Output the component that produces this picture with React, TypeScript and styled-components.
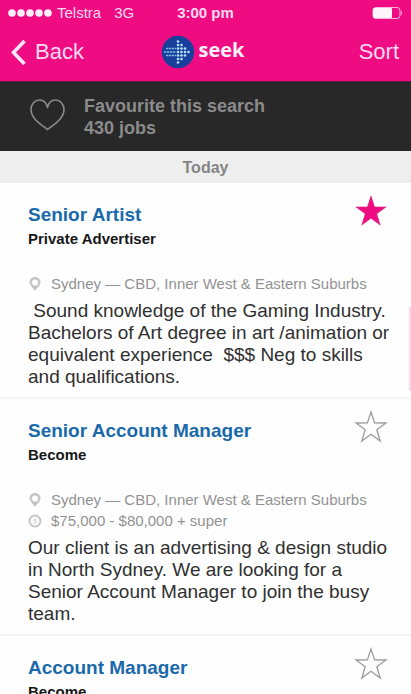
import React, { useState } from "react";
import styled, { createGlobalStyle } from "styled-components";

const GlobalStyle = createGlobalStyle`
  * { box-sizing: border-box; }
  html, body, #root { height: 100%; }
  body {
    margin: 0;
    background: #fefefe;
    font-family: "Liberation Sans", Arial, Helvetica, sans-serif;
    color: #303030;
  }
  h1, h2, p, ul { margin: 0; padding: 0; }
  button { font: inherit; border: 0; padding: 0; background: none; cursor: pointer; }
`;

const Screen = styled.div`
  height: 100vh;
  display: flex;
  flex-direction: column;
  overflow: hidden;
`;

const Header = styled.header`
  background: #ef0c82;
  color: #ffd9f0;
`;

const StatusBar = styled.div`
  display: grid;
  grid-template-columns: 1fr auto 1fr;
  align-items: center;
  height: 25px;
  padding: 0 8px;
  font-size: 15px;
`;

const Carrier = styled.div`
  display: flex;
  align-items: center;
  gap: 5px;
`;

const Network = styled.span`
  margin-left: 8px;
`;

const Clock = styled.span`
  font-weight: bold;
`;

const BatteryIcon = styled.svg`
  justify-self: end;
`;

const NavBar = styled.nav`
  display: grid;
  grid-template-columns: 1fr auto 1fr;
  align-items: center;
  height: 56px;
  padding: 0 12px 2px 10px;
`;

const NavButton = styled.button<{ $end?: boolean }>`
  display: flex;
  align-items: center;
  gap: 9px;
  justify-self: ${(p) => (p.$end ? "end" : "start")};
  color: #ffd9f0;
  font-size: 22px;
  line-height: 26px;
`;

const Brand = styled.h1`
  display: flex;
  align-items: center;
  gap: 4px;
  padding-right: 4px;
  color: #fff0f8;
  font: bold 20px/32px "Open Sans", "Noto Sans", sans-serif;
`;

const BrandName = styled.span`
  padding-bottom: 5px;
`;

const Favourite = styled.button`
  display: flex;
  flex-shrink: 0;
  align-items: center;
  gap: 18px;
  width: 100%;
  height: 70px;
  padding: 0 30px 0 29px;
  border-top: 1px solid #5d1740;
  background: #282828;
  color: #8b8b8b;
  text-align: left;
`;

const FavouriteText = styled.span`
  display: flex;
  flex-direction: column;
  font-weight: bold;
  font-size: 18px;
  line-height: 22px;
`;

const DayHeading = styled.h2`
  flex-shrink: 0;
  background: #eeeeee;
  color: #858585;
  font-size: 16px;
  line-height: 32px;
  padding-top: 1px;
  height: 32px;
  text-align: center;
`;

const ListArea = styled.main`
  position: relative;
  flex: 1;
  min-height: 0;
  overflow: hidden;
`;

const JobList = styled.ul`
  list-style: none;
`;

const ScrollMark = styled.span`
  position: absolute;
  top: 124px;
  right: 0;
  width: 2px;
  height: 84px;
  background: #fcd5e8;
`;

const JobItem = styled.li`
  padding: 20px 20px 9px 28px;
  border-bottom: 2px solid #f4f4f4;
`;

const JobTop = styled.div`
  display: flex;
  justify-content: space-between;
  align-items: flex-start;
`;

const JobHeading = styled.div`
  display: flex;
  flex-direction: column;
  height: 70px;
`;

const JobTitle = styled.a`
  color: #1a69aa;
  font-weight: bold;
  font-size: 19px;
  line-height: 24px;
  text-decoration: none;
`;

const Company = styled.p`
  color: #181818;
  font-weight: bold;
  font-size: 15px;
  line-height: 23px;
`;

const StarButton = styled.button`
  display: flex;
  margin: -9px 3px 0 0;
`;

const MetaList = styled.div`
  padding-bottom: 6px;
`;

const Meta = styled.p`
  display: flex;
  align-items: center;
  gap: 8px;
  color: #929292;
  font-size: 15px;
  line-height: 21px;
`;

const Summary = styled.p`
  font-size: 19px;
  line-height: 22px;
  white-space: pre-wrap;
`;

const SignalDots = () => (
  <svg width="44" height="10" viewBox="0 0 44 10" fill="#fff0f8" aria-hidden="true">
    {[4, 13, 22, 31, 40].map((x) => (
      <circle key={x} cx={x} cy="5" r="3.8" />
    ))}
  </svg>
);

const Battery = () => (
  <BatteryIcon width="32" height="14" viewBox="0 0 32 14" aria-hidden="true">
    <rect x="2" y="1.5" width="27" height="11" rx="3" fill="none" stroke="#ffb5dd" />
    <rect x="2" y="2" width="19" height="10" rx="1" fill="#fff4fa" />
    <path d="M30 4.500Q32 7 30 9.500Z" fill="#ffb5dd" />
  </BatteryIcon>
);

const BackChevron = () => (
  <svg width="16" height="26" viewBox="0 0 16 26" fill="none" aria-hidden="true">
    <path d="M14.500 2 3.500 13.500l11 11.500" stroke="#ffe6f5" strokeWidth="3.600" />
  </svg>
);

const logoColumns = [
  { x: 17, ys: [6.5, 10, 13.5, 17, 20.5, 24, 27.5] },
  { x: 20.5, ys: [10, 13.5, 17, 20.5, 24] },
  { x: 24, ys: [13.5, 17, 20.5] },
  { x: 27.5, ys: [17] },
];

const SeekLogo = () => (
  <svg width="34" height="34" viewBox="0 0 34 34" aria-hidden="true">
    <circle cx="17" cy="17" r="16.2" fill="#173f9b" />
    <g fill="#b4e2f5">
      {logoColumns.map((c) =>
        c.ys.map((y) => <circle key={`${c.x}-${y}`} cx={c.x} cy={y} r="1.35" />)
      )}
    </g>
    <path
      d="M5 13.500h10M3 17h12M5 20.500h10"
      stroke="#7eb8e3"
      strokeWidth="1.500"
      strokeDasharray="2.400 .6"
    />
  </svg>
);

const Heart = () => (
  <svg width="37" height="36" viewBox="0 1 37 36" fill="none" aria-hidden="true">
    <path
      d="M18.500 31.500C12 26.500 2 20.500 2 11.500 2 6 6 2 10.500 2c4 0 7 3 8 7.500C19.500 5 22.500 2 26.500 2 31 2 35 6 35 11.500c0 9-10 15-16.500 20Z"
      stroke="#8c8c8c"
      strokeWidth="1.600"
      strokeLinejoin="round"
    />
  </svg>
);

const Star = ({ filled }: { filled: boolean }) => (
  <svg width="34" height="34" viewBox="0 0 34 34" aria-hidden="true">
    <path
      d="m17 2 3.600 10.900 11.400.1-9.200 6.800 3.400 11.200L17 24.300 7.800 31l3.400-11.200L2 13l11.400-.1Z"
      fill={filled ? "#ef0c82" : "none"}
      stroke={filled ? "#cf2884" : "#9b9b9b"}
      strokeWidth={filled ? 0.6 : 1.3}
    />
  </svg>
);

const Pin = () => (
  <svg width="15" height="16" viewBox="0 0 15 16" aria-hidden="true">
    <path
      fillRule="evenodd"
      d="M7 1C3.700 1 1.500 3.300 1.500 6.300 1.500 9.500 5 12 7 15c2-3 5.500-5.500 5.500-8.700C12.500 3.300 10.300 1 7 1Zm0 2.500a3 3 0 1 1 0 6 3 3 0 0 1 0-6Z"
      fill="#c6c6c6"
    />
  </svg>
);

const Coin = () => (
  <svg width="15" height="16" viewBox="0 0 15 16" fill="none" aria-hidden="true">
    <circle cx="7" cy="8" r="5.500" stroke="#c6c6c6" strokeWidth="2" />
    <path d="M8.500 6H6.800a1 1 0 0 0 0 2h.6a1 1 0 0 1 0 2H5.500" stroke="#d0d0d0" />
  </svg>
);

interface Job {
  title: string;
  company: string;
  location?: string;
  salary?: string;
  summary?: string;
  starred: boolean;
}

const cbd = "Sydney — CBD, Inner West & Eastern Suburbs";

const jobs: Job[] = [
  {
    title: "Senior Artist",
    company: "Private Advertiser",
    location: cbd,
    summary:
      " Sound knowledge of the Gaming Industry. Bachelors of Art degree in art /animation or equivalent experience  $$$ Neg to skills and qualifications.",
    starred: true,
  },
  {
    title: "Senior Account Manager",
    company: "Become",
    location: cbd,
    salary: "$75,000 - $80,000 + super",
    summary:
      "Our client is an advertising & design studio in North Sydney. We are looking for a Senior Account Manager to join the busy team.",
    starred: false,
  },
  {
    title: "Account Manager",
    company: "Become",
    starred: false,
  },
];

const JobRow = ({ job }: { job: Job }) => {
  const [starred, setStarred] = useState(job.starred);
  return (
    <JobItem>
      <JobTop>
        <JobHeading>
          <JobTitle href="#">{job.title}</JobTitle>
          <Company>{job.company}</Company>
        </JobHeading>
        <StarButton
          aria-label={`Save ${job.title}`}
          aria-pressed={starred}
          onClick={() => setStarred(!starred)}
        >
          <Star filled={starred} />
        </StarButton>
      </JobTop>
      <MetaList>
        {job.location && (
          <Meta>
            <Pin />
            {job.location}
          </Meta>
        )}
        {job.salary && (
          <Meta>
            <Coin />
            {job.salary}
          </Meta>
        )}
      </MetaList>
      {job.summary && <Summary>{job.summary}</Summary>}
    </JobItem>
  );
};

export default function App() {
  return (
    <Screen>
      <GlobalStyle />
      <Header>
        <StatusBar>
          <Carrier>
            <SignalDots />
            <span>Telstra</span>
            <Network>3G</Network>
          </Carrier>
          <Clock>3:00 pm</Clock>
          <Battery />
        </StatusBar>
        <NavBar>
          <NavButton>
            <BackChevron />
            Back
          </NavButton>
          <Brand>
            <SeekLogo />
            <BrandName>seek</BrandName>
          </Brand>
          <NavButton $end>Sort</NavButton>
        </NavBar>
      </Header>
      <Favourite>
        <Heart />
        <FavouriteText>
          <span>Favourite this search</span>
          <span>430 jobs</span>
        </FavouriteText>
      </Favourite>
      <DayHeading>Today</DayHeading>
      <ListArea>
        <JobList>
          {jobs.map((job) => (
            <JobRow key={job.title} job={job} />
          ))}
        </JobList>
        <ScrollMark />
      </ListArea>
    </Screen>
  );
}
